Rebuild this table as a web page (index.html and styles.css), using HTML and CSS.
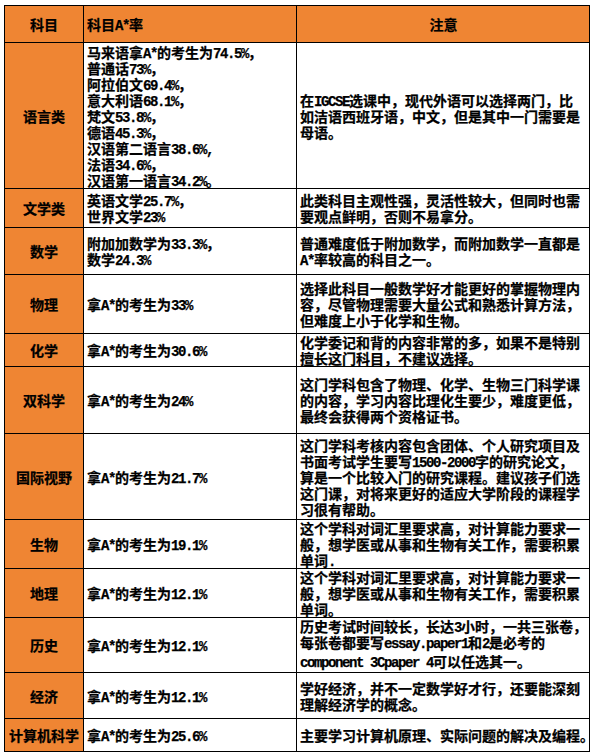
FILE: index.html
```html
<!DOCTYPE html>
<html lang="zh-CN">
<head>
<meta charset="utf-8">
<title>IGCSE 科目A*率</title>
<link rel="stylesheet" href="styles.css">
</head>
<body>
<table class="grid">
  <colgroup>
    <col class="c1">
    <col class="c2">
    <col class="c3">
  </colgroup>
  <tr class="head h37">
    <th class="subj">科目</th>
    <th class="rate">科目<span class="en">A*</span>率</th>
    <th class="note-h">注意</th>
  </tr>
  <tr class="h146">
    <td class="subj">语言类</td>
    <td class="rate">马来语拿<span class="en">A*</span>的考生为<span class="en">74.5%</span>，<br>普通话<span class="en">73%</span>，<br>阿拉伯文<span class="en">69.4%</span>，<br>意大利语<span class="en">68.1%</span>，<br>梵文<span class="en">53.8%</span>，<br>德语<span class="en">45.3%</span>，<br>汉语第二语言<span class="en">38.6%,</span><br>法语<span class="en">34.6%</span>，<br>汉语第一语言<span class="en">34.2%</span>。</td>
    <td class="note">在<span class="en">IGCSE</span>选课中，现代外语可以选择两门，比<br>如洁语西班牙语，中文，但是其中一门需要是<br>母语。</td>
  </tr>
  <tr class="h39">
    <td class="subj">文学类</td>
    <td class="rate">英语文学<span class="en">25.7%</span>，<br>世界文学<span class="en">23%</span></td>
    <td class="note">此类科目主观性强，灵活性较大，但同时也需<br>要观点鲜明，否则不易拿分。</td>
  </tr>
  <tr class="h47">
    <td class="subj">数学</td>
    <td class="rate">附加加数学为<span class="en">33.3%</span>，<br>数学<span class="en">24.3%</span></td>
    <td class="note">普通难度低于附加数学，而附加数学一直都是<br><span class="en">A*</span>率较高的科目之一。</td>
  </tr>
  <tr class="h59">
    <td class="subj">物理</td>
    <td class="rate">拿<span class="en">A*</span>的考生为<span class="en">33%</span></td>
    <td class="note">选择此科目一般数学好才能更好的掌握物理内<br>容，尽管物理需要大量公式和熟悉计算方法，<br>但难度上小于化学和生物。</td>
  </tr>
  <tr class="h33">
    <td class="subj">化学</td>
    <td class="rate">拿<span class="en">A*</span>的考生为<span class="en">30.6%</span></td>
    <td class="note">化学委记和背的内容非常的多，如果不是特别<br>擅长这门科目，不建议选择。</td>
  </tr>
  <tr class="h67">
    <td class="subj">双科学</td>
    <td class="rate">拿<span class="en">A*</span>的考生为<span class="en">24%</span></td>
    <td class="note">这门学科包含了物理、化学、生物三门科学课<br>的内容，学习内容比理化生要少，难度更低，<br>最终会获得两个资格证书。</td>
  </tr>
  <tr class="h86">
    <td class="subj">国际视野</td>
    <td class="rate">拿<span class="en">A*</span>的考生为<span class="en">21.7%</span></td>
    <td class="note">这门学科考核内容包含团体、个人研究项目及<br>书面考试学生要写<span class="en">1500-2000</span>字的研究论文，<br>算是一个比较入门的研究课程。建议孩子们选<br>这门课，对将来更好的适应大学阶段的课程学<br>习很有帮助。</td>
  </tr>
  <tr class="h49">
    <td class="subj">生物</td>
    <td class="rate">拿<span class="en">A*</span>的考生为<span class="en">19.1%</span></td>
    <td class="note">这个学科对词汇里要求高，对计算能力要求一<br>般，想学医或从事和生物有关工作，需要积累<br>单词<span class="en">.</span></td>
  </tr>
  <tr class="h49">
    <td class="subj">地理</td>
    <td class="rate">拿<span class="en">A*</span>的考生为<span class="en">12.1%</span></td>
    <td class="note">这个学科对词汇里要求高，对计算能力要求一<br>般，想学医或从事和生物有关工作，需要积累<br>单词。</td>
  </tr>
  <tr class="h54">
    <td class="subj">历史</td>
    <td class="rate">拿<span class="en">A*</span>的考生为<span class="en">12.1%</span></td>
    <td class="note">历史考试时间较长，长达<span class="en">3</span>小时，一共三张卷，<br>每张卷都要写<span class="en">essay.paper1</span>和<span class="en">2</span>是必考的<br><span class="tall"><span class="en">component 3Cpaper 4</span>可以任选其一。</span></td>
  </tr>
  <tr class="h46">
    <td class="subj">经济</td>
    <td class="rate">拿<span class="en">A*</span>的考生为<span class="en">12.1%</span></td>
    <td class="note">学好经济，并不一定数学好才行，还要能深刻<br>理解经济学的概念。</td>
  </tr>
  <tr class="h33">
    <td class="subj">计算机科学</td>
    <td class="rate">拿<span class="en">A*</span>的考生为<span class="en">25.6%</span></td>
    <td class="note">主要学习计算机原理、实际问题的解决及编程。</td>
  </tr>
</table>
</body>
</html>
```

FILE: styles.css
```css
html, body {
  margin: 0;
  padding: 0;
  background: #ffffff;
}

body {
  padding: 5px 0 0 4px;
  font-family: "Noto Sans CJK SC", "Noto Sans", sans-serif;
  font-size: 14px;
  font-weight: 700;
  color: #000000;
  -webkit-text-stroke: 0.25px #000000;
}

.grid {
  border-collapse: collapse;
  table-layout: fixed;
  width: 586px;
}

.c1 { width: 79px; }
.c2 { width: 213px; }
.c3 { width: 293px; }

.grid th,
.grid td {
  border: 1px solid #000000;
  padding: 0 2px 0 3px;
  vertical-align: middle;
  line-height: 16px;
  white-space: nowrap;
  overflow: visible;
  font-weight: 700;
}

.head th {
  background: #ef8533;
}

.subj {
  background: #ef8533;
  text-align: center;
}

.grid th.subj,
.grid td.subj {
  padding: 0;
}

.rate {
  text-align: left;
}

.note-h {
  text-align: center;
}

.note {
  text-align: left;
}

.en {
  font-family: "Liberation Mono", "DejaVu Sans Mono", monospace;
  letter-spacing: -1.4px;
  line-height: 8px;
}

.tall {
  display: inline-block;
  line-height: 22px;
}

.h37 { height: 37px; }
.h146 { height: 146px; }
.h39 { height: 39px; }
.h47 { height: 47px; }
.h59 { height: 59px; }
.h33 { height: 33px; }
.h67 { height: 67px; }
.h86 { height: 86px; }
.h49 { height: 49px; }
.h54 { height: 54px; }
.h46 { height: 46px; }
```
